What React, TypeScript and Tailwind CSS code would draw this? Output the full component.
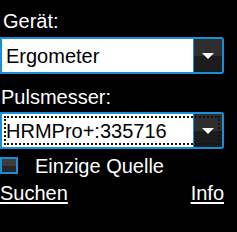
import { useState } from 'react';

type ComboProps = {
  value: string;
  focused?: boolean;
};

function Combo({ value, focused }: ComboProps) {
  return (
    <div className="relative flex h-[37px] w-[224px] rounded-r-[3px] border-2 border-[#1b8fd6] bg-white">
      <div className="flex min-w-0 flex-1 items-center pl-[4px] pt-[2px] text-[20px] leading-[23px] text-black">
        {value}
      </div>
      <div className="flex w-[29px] flex-col border-l border-[#1b8fd6]">
        <div className="relative flex-1 bg-[#2e2e2e]">
          <span className="absolute bottom-[-3px] left-1/2 h-0 w-0 -translate-x-1/2 border-x-[6px] border-t-[6px] border-x-transparent border-t-white" />
        </div>
        <div className="flex-1 bg-[#1c1c1c]" />
      </div>
      {/* focus rectangle */}
      {focused && (
        <div className="pointer-events-none absolute inset-[2px] border-2 border-dotted border-[#111]" />
      )}
    </div>
  );
}

export default function App() {
  const [only, setOnly] = useState(false);

  return (
    <div
      className="h-[232px] w-[237px] overflow-hidden bg-black pt-[10px] text-[20px] leading-[23px] text-white"
      style={{ fontFamily: '"Liberation Sans", Arial, sans-serif' }}
    >
      <div className="pl-[3px]">Gerät:</div>
      <div className="mt-[4px]">
        <Combo value="Ergometer" />
      </div>
      <div className="mt-[12px] pl-[1px]">Pulsmesser:</div>
      <div className="mt-[3px]">
        <Combo value="HRMPro+:335716" focused />
      </div>
      <label className="mt-[6px] flex cursor-pointer items-start gap-[17px]" onClick={() => setOnly(!only)}>
        <span className="mt-[2px] h-[17px] w-[18px] border-2 border-[#1b8fd6] bg-gradient-to-b from-[#3c3c3c] from-50% to-[#262626] to-50%" />
        <span>Einzige Quelle</span>
      </label>
      <div className="mt-[4px] flex w-[224px] items-center justify-between">
        <a className="underline underline-offset-[2px]">Suchen</a>
        <a className="underline underline-offset-[2px]">Info</a>
      </div>
    </div>
  );
}
